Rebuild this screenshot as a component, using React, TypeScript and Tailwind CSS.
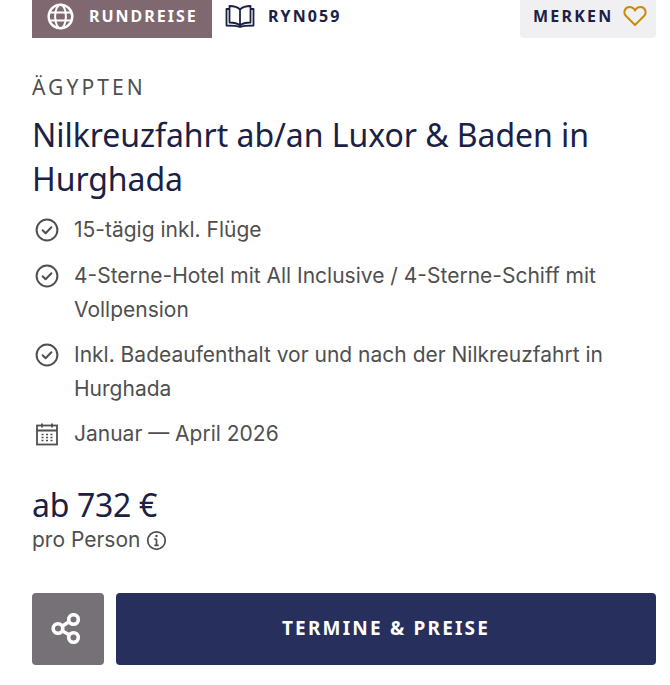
import React from "react";

const Check = () => (
  <svg width="24" height="24" viewBox="0 0 24 24" fill="none" stroke="#4f4f4f" strokeWidth="2" strokeLinecap="round" strokeLinejoin="round" className="shrink-0">
    <circle cx="12" cy="12" r="10.400" />
    <path d="M7.600 12.300l3 3 5.800-6" />
  </svg>
);

const Calendar = () => (
  <svg width="24" height="24" viewBox="0 0 24 24" fill="none" stroke="#4f4f4f" strokeWidth="1.800" className="shrink-0">
    <rect x="2" y="3.500" width="20" height="19" />
    <path d="M2 8.500h20M7 1.500v4M17 1.500v4" />
    <path d="M6.500 12.500h2M11 12.500h2M15.500 12.500h2M6.500 15.500h2M11 15.500h2M15.500 15.500h2M6.500 18.500h2M11 18.500h2M15.500 18.500h2" strokeWidth="1.500" />
  </svg>
);

const Row = ({ icon, children }: { icon: React.ReactNode; children: React.ReactNode }) => (
  <li className="flex gap-[15px] pl-[3px]">
    <div className="h-[34px] flex items-center">{icon}</div>
    <div className="text-[21px] leading-[34px] text-[#4f4f4f]">{children}</div>
  </li>
);

export default function App() {
  return (
    <div className="w-[670px] h-[685px] bg-white px-[32px] pr-[14px] font-['Inter',sans-serif] overflow-hidden">
      <div className="flex items-start h-[38px]">
        <div className="w-[180px] h-[38px] bg-[#806871] flex items-center pl-[15px] pb-[6px] gap-[15px]">
          <svg width="27" height="27" viewBox="0 0 24 24" fill="none" stroke="#fff" strokeWidth="2.200">
            <circle cx="12" cy="12" r="10.500" />
            <ellipse cx="12" cy="12" rx="4.800" ry="10.500" strokeWidth="1.800" />
            <path d="M2.500 8.500h19M2.500 15.500h19" strokeWidth="1.800" />
          </svg>
          <span className="font-['Noto_Sans',sans-serif] font-bold text-[16px] tracking-[2px] text-white">RUNDREISE</span>
        </div>
        <div className="flex items-center h-[32px] ml-[13px] gap-[13px]">
          <svg width="30" height="24" viewBox="0 0 30 24" fill="none" stroke="#1a2145" strokeWidth="1.800" strokeLinejoin="round">
            <path d="M15 5.500C12.500 3 8.500 2 4.500 2v16.500c4 0 8 .8 10.500 3 2.500-2.200 6.500-3 10.500-3V2c-4 0-8 1-10.500 3.500zM15 5.500V21.500" />
            <path d="M4.500 5H1.500v16.500c5 0 10 0 13.500 1.500 3.500-1.500 8.500-1.500 13.500-1.500V5h-3" />
          </svg>
          <span className="font-['Noto_Sans',sans-serif] font-bold text-[16px] tracking-[2.100px] text-[#1a2145]">RYN059</span>
        </div>
        <div className="ml-auto w-[136px] h-[38px] bg-[#f0f0f3] rounded-b-[4px] flex items-center pl-[13px] pb-[6px] gap-[10px]">
          <span className="font-['Noto_Sans',sans-serif] font-bold text-[16px] tracking-[2.200px] text-[#1a2145]">MERKEN</span>
          <svg width="24" height="22" viewBox="0 0 24 22" fill="none" stroke="#cc8a0a" strokeWidth="2" strokeLinejoin="round">
            <path d="M12 20L3 11C0 8 1.500 2 6.500 2c2.500 0 4.500 1.500 5.500 3.500C13 3.500 15 2 17.500 2c5 0 6.500 6 3.500 9z" />
          </svg>
        </div>
      </div>

      <div className="mt-[36px] font-['Noto_Sans',sans-serif] text-[21px] leading-[27px] tracking-[3.100px] text-[#4f4f4f]">ÄGYPTEN</div>
      <h1 className="mt-[12px] font-['Noto_Sans',sans-serif] text-[32px] leading-[44px] tracking-[-0.05px] text-[#1a2145]">
        Nilkreuzfahrt ab/an Luxor &amp; Baden in Hurghada
      </h1>

      <ul className="mt-[12px] flex flex-col gap-[11px]">
        <Row icon={<Check />}>15-tägig inkl. Flüge</Row>
        <div className="mt-[1px]">
          <Row icon={<Check />}>4-Sterne-Hotel mit All Inclusive / 4-Sterne-Schiff mit Vollpension</Row>
        </div>
        <Row icon={<Check />}>Inkl. Badeaufenthalt vor und nach der Nilkreuzfahrt in Hurghada</Row>
        <Row icon={<Calendar />}>Januar — April 2026</Row>
      </ul>

      <div className="mt-[32px] font-['Noto_Sans',sans-serif] text-[32px] leading-[44px] tracking-[-0.3px] text-[#1a2145]">ab 732 €</div>
      <div className="flex items-center gap-[6px] text-[21px] leading-[26px] text-[#4f4f4f]">
        pro Person
        <svg width="21" height="21" viewBox="0 0 24 24" fill="none" stroke="#4f4f4f" strokeWidth="2">
          <circle cx="12" cy="12" r="10" />
          <path d="M12 10.500v7M9.500 17.500h5M9.500 10.500H12" strokeWidth="2" />
          <circle cx="12" cy="6.800" r="1.400" fill="#4f4f4f" stroke="none" />
        </svg>
      </div>

      <div className="mt-[40px] flex gap-[12px]">
        <div className="w-[72px] h-[72px] rounded-[4px] bg-[#757177] flex items-center justify-center">
          <svg width="32" height="32" viewBox="0 0 32 32" fill="none" stroke="#fff" strokeWidth="3.600" className="-ml-[2px]">
            <circle cx="7" cy="15.500" r="4.800" />
            <circle cx="22.500" cy="6.500" r="4.800" />
            <circle cx="22.500" cy="24.500" r="4.800" />
            <path d="M11.500 13l7-4.500M11.500 18l7 4" />
          </svg>
        </div>
        <div className="flex-1 h-[72px] pb-[1px] rounded-[4px] bg-[#27305c] flex items-center justify-center font-['Noto_Sans',sans-serif] font-bold text-[19px] tracking-[2.200px] text-white">
          TERMINE &amp; PREISE
        </div>
      </div>
    </div>
  );
}
